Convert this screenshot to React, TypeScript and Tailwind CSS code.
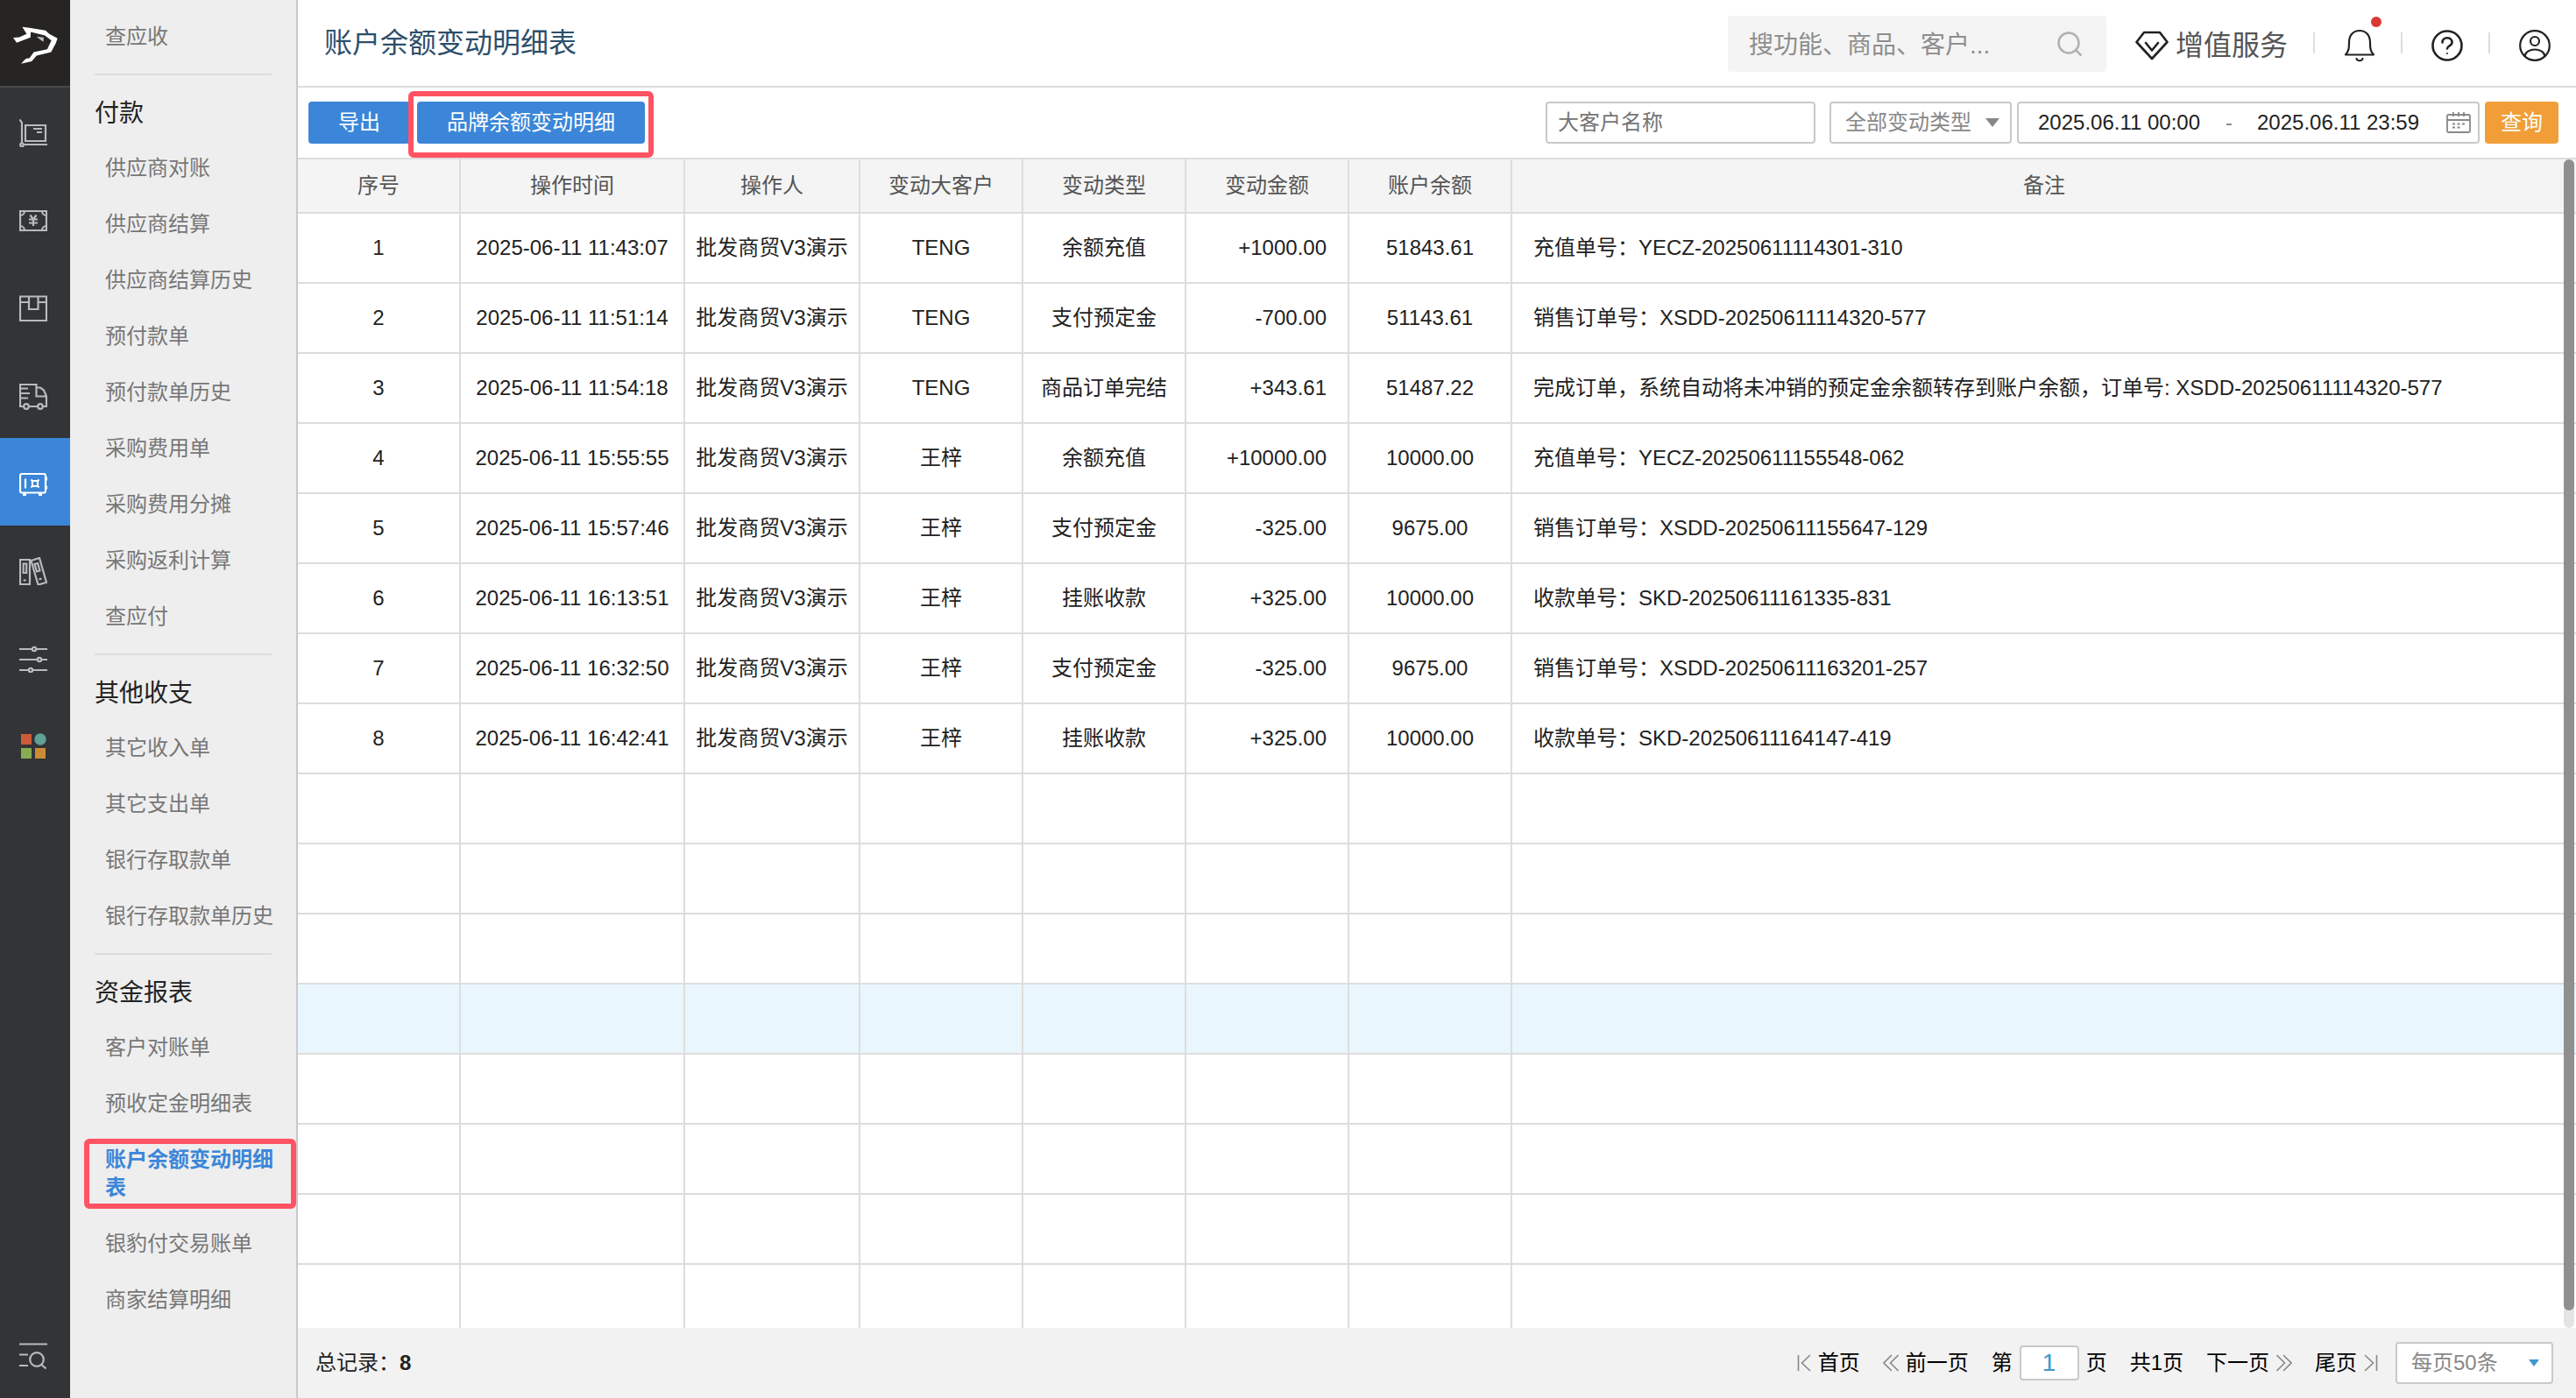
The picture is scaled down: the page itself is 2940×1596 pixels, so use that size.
/**
 * 账户余额变动明细表
 *
 * Report page: icon rail, report menu, filter bar, detail table and pager
 */

import { useState } from 'react';
import type { ReactNode } from 'react';

type MenuGroup = { title?: string; items: string[] };

type Change = {
  time: string;
  operator: string;
  customer: string;
  type: string;
  amount: string;
  balance: string;
  remark: string;
};

const ACTIVE_MENU = '账户余额变动明细表';

const menuGroups: MenuGroup[] = [
  { items: ['查应收'] },
  {
    title: '付款',
    items: [
      '供应商对账',
      '供应商结算',
      '供应商结算历史',
      '预付款单',
      '预付款单历史',
      '采购费用单',
      '采购费用分摊',
      '采购返利计算',
      '查应付',
    ],
  },
  { title: '其他收支', items: ['其它收入单', '其它支出单', '银行存取款单', '银行存取款单历史'] },
  {
    title: '资金报表',
    items: ['客户对账单', '预收定金明细表', ACTIVE_MENU, '银豹付交易账单', '商家结算明细'],
  },
];

const OPERATOR = '批发商贸V3演示';

const changes: Change[] = [
  { time: '2025-06-11 11:43:07', operator: OPERATOR, customer: 'TENG', type: '余额充值', amount: '+1000.00', balance: '51843.61', remark: '充值单号：YECZ-20250611114301-310' },
  { time: '2025-06-11 11:51:14', operator: OPERATOR, customer: 'TENG', type: '支付预定金', amount: '-700.00', balance: '51143.61', remark: '销售订单号：XSDD-20250611114320-577' },
  { time: '2025-06-11 11:54:18', operator: OPERATOR, customer: 'TENG', type: '商品订单完结', amount: '+343.61', balance: '51487.22', remark: '完成订单，系统自动将未冲销的预定金余额转存到账户余额，订单号: XSDD-20250611114320-577' },
  { time: '2025-06-11 15:55:55', operator: OPERATOR, customer: '王梓', type: '余额充值', amount: '+10000.00', balance: '10000.00', remark: '充值单号：YECZ-20250611155548-062' },
  { time: '2025-06-11 15:57:46', operator: OPERATOR, customer: '王梓', type: '支付预定金', amount: '-325.00', balance: '9675.00', remark: '销售订单号：XSDD-20250611155647-129' },
  { time: '2025-06-11 16:13:51', operator: OPERATOR, customer: '王梓', type: '挂账收款', amount: '+325.00', balance: '10000.00', remark: '收款单号：SKD-20250611161335-831' },
  { time: '2025-06-11 16:32:50', operator: OPERATOR, customer: '王梓', type: '支付预定金', amount: '-325.00', balance: '9675.00', remark: '销售订单号：XSDD-20250611163201-257' },
  { time: '2025-06-11 16:42:41', operator: OPERATOR, customer: '王梓', type: '挂账收款', amount: '+325.00', balance: '10000.00', remark: '收款单号：SKD-20250611164147-419' },
];

const EMPTY_ROWS = 8;
const HOVERED_EMPTY_ROW = 3;

/* Rail icons, all on a 32px grid */
const railIcons: { label: string; icon: ReactNode }[] = [
  {
    label: '进货',
    icon: (
      <>
        <path d="M0.500 0.500 3 4v24M5.500 29H32" />
        <circle cx="3" cy="29.500" r="1.800" />
        <path d="M7 7h23v18H7zM16 11h10M20 15h6" />
      </>
    ),
  },
  {
    label: '销售',
    icon: (
      <>
        <path d="M1 5h30v22H1z" />
        <path d="M1 10a5 5 0 0 0 5-5M26 5a5 5 0 0 0 5 5M31 22a5 5 0 0 0-5 5M6 27a5 5 0 0 0-5-5" />
        <path d="m12.500 9.500 3.500 5 3.500-5M16 14.500V22M11 14.500h10M11 18.500h10" />
      </>
    ),
  },
  {
    label: '库存',
    icon: <path d="M1 2.500h30v27.500H1zM1 9h9.500M21.500 9H31M11 2.500v14.500h10.500V2.500" />,
  },
  {
    label: '配送',
    icon: (
      <>
        <path d="M5 28H1V3h18.500v13.500H31M19.500 6.500H24l4 3 3 7V28h-4M11 28h10" />
        <circle cx="8" cy="28" r="2.800" />
        <circle cx="24" cy="28" r="2.800" />
        <path d="M1 7.500h9M1 13h11M1 18.500h9" />
      </>
    ),
  },
  {
    label: '资金',
    icon: (
      <>
        <rect x="1" y="5" width="29" height="21.500" rx="2" />
        <path d="M7 10.500v11M30 10h2M30 20.500h2" />
        <path d="M30.500 8.500v4M30.500 18.500v4M4 28.500h4M22 28.500h4" strokeWidth="3" />
        <path d="M15 13h6v6h-6zM13.500 11.500 15 13M22.500 11.500 21 13M13.500 20.500 15 19M22.500 20.500 21 19" />
      </>
    ),
  },
  {
    label: '报表',
    icon: (
      <>
        <path d="M1 3h11v28H1zM4.700 7.500h3.500v10.500H4.700zM4.700 26.500h3" />
        <path d="m13.500 4 9.500-3 8 28-9.500 2.500zM17.500 8l3.500-1 2.500 8.500-3.500 1zM22.500 25.500l3-1" />
      </>
    ),
  },
  {
    label: '设置',
    icon: (
      <>
        <path d="M0 5h15M19 5h13M0 17h21M25 17h7M0 29h11M15 29h17" />
        <circle cx="17" cy="5" r="2.200" />
        <circle cx="23" cy="17" r="2.200" />
        <circle cx="13" cy="29" r="2.200" />
      </>
    ),
  },
  {
    label: '应用',
    icon: (
      <g stroke="none">
        <rect x="2" y="2" width="12" height="12" fill="#cb5c37" />
        <circle cx="24" cy="8" r="6.700" fill="#5fa195" />
        <rect x="2" y="18" width="12" height="12" fill="#86ad52" />
        <rect x="18" y="18" width="12" height="12" fill="#cd8b36" />
      </g>
    ),
  },
];

function RailButton({ label, active, children }: { label: string; active?: boolean; children: ReactNode }) {
  return (
    <button
      aria-label={label}
      className={`flex h-[100px] w-full shrink-0 items-center justify-center pt-1 pr-1 ${
        active ? 'bg-[#3b86d8] text-white' : 'text-[#b9babb]'
      }`}
    >
      <svg viewBox="0 0 32 32" className="size-8" fill="none" stroke="currentColor" strokeWidth="2.200">
        {children}
      </svg>
    </button>
  );
}

function Rail() {
  return (
    <nav className="flex w-20 shrink-0 flex-col bg-[#333436]">
      <a
        href="#home"
        aria-label="首页"
        className="flex h-[100px] shrink-0 items-center justify-center border-b-2 border-[#48494b] bg-[#272523] pt-1"
      >
        <svg viewBox="42 90 152 128" className="h-[43px] w-[51px]" fill="#fff">
          <path d="M42 129 63 127 88 116 73 92 97 95 152 104 165 116 193 131 187 148 171 178 122 190 105 209 69 217 85 200 98 198 112 178 158 168 172 138 150 121 102 109 101 128 54 146z" />
          <path d="M122 125 146 128 145 143 134 135z" opacity="0.7" />
        </svg>
      </a>
      {railIcons.map(({ label, icon }) => (
        <RailButton key={label} label={label} active={label === '资金'}>
          {icon}
        </RailButton>
      ))}
      <div className="mt-auto">
        <RailButton label="查找功能">
          <path d="M0 2.500h32M0 14.500h10M0 27h10" />
          <circle cx="20" cy="20" r="7.800" />
          <path d="m25.500 26 5 4.500" />
        </RailButton>
      </div>
    </nav>
  );
}

function SideMenu() {
  return (
    <aside className="w-[260px] shrink-0 border-r-2 border-[#c9c9c9] bg-[#eee] pt-2.5">
      {menuGroups.map((group, i) => (
        <section key={i}>
          {group.title && (
            <>
              <hr className="mx-7 mt-2.5 border-t-2 border-[#dcdcdc]" />
              <h2 className="px-7 pt-3.5 text-[28px] leading-[60px] text-[#222]">{group.title}</h2>
            </>
          )}
          <ul>
            {group.items.map((item) => (
              <li key={item} className="relative">
                <a
                  href="#report"
                  className={`block py-4 pr-6 pl-10 text-2xl ${
                    item === ACTIVE_MENU ? 'font-bold text-[#3b86d8]' : 'text-[#777]'
                  }`}
                >
                  {item}
                </a>
                {item === ACTIVE_MENU && (
                  <span className="pointer-events-none absolute top-2 right-0 bottom-2 left-4 rounded-md border-[6px] border-[#ff5364]" />
                )}
              </li>
            ))}
          </ul>
        </section>
      ))}
    </aside>
  );
}

function HeaderAction({ label, children }: { label: string; children: ReactNode }) {
  return (
    <div className="flex w-[100px] items-center">
      <span className="h-6 w-0.5 bg-[#ddd]" />
      <button aria-label={label} className="relative flex flex-1 justify-center pt-1.5 pl-1">
        {children}
      </button>
    </div>
  );
}

function Header() {
  return (
    <header className="flex h-[100px] shrink-0 items-center border-b-2 border-[#ddd] pl-[30px]">
      <h1 className="text-[32px] leading-10 text-[#2d4f6c]">账户余额变动明细表</h1>
      <div className="relative ml-auto">
        <input
          type="search"
          aria-label="搜索"
          placeholder="搜功能、商品、客户..."
          className="mt-0.5 h-16 w-[432px] rounded bg-[#f4f4f4] pt-1 pr-20 pl-6 text-[28px] placeholder:text-[#8e8e8e]"
        />
        <svg viewBox="0 0 28 28" className="absolute top-5 right-7 size-7" fill="none" stroke="#b0b0b0" strokeWidth="2.500">
          <circle cx="13" cy="13" r="11.500" />
          <path d="m21 21 6.500 6.500" />
        </svg>
      </div>
      <button className="mr-[29px] ml-[33px] flex items-center gap-2 pt-1.5 text-[32px] leading-10 text-[#555]">
        <svg viewBox="0 0 38 34" className="h-[34px] w-[38px]" fill="none" stroke="#222" strokeWidth="2.600" strokeLinejoin="round">
          <path d="M10 2h18l8.500 11L19 32 1.500 13z" />
          <path d="m12 14 7 8.500 7-8.500" strokeLinecap="round" />
        </svg>
        增值服务
      </button>
      <HeaderAction label="消息">
        <svg viewBox="0 0 36 38" className="h-[38px] w-9" fill="none" stroke="#222" strokeWidth="2.200" strokeLinejoin="round">
          <path d="M2 29.500c4-4.500 4-8 4-14C6 7 11 2 18 2s12 5 12 13.500c0 6 0 9.500 4 14z" />
          <path d="M14.500 34c1 3 6 3 7 0" strokeLinecap="round" />
        </svg>
        <span className="absolute -top-2 right-[22px] size-3 rounded-full bg-[#d93a35]" />
      </HeaderAction>
      <HeaderAction label="帮助">
        <svg viewBox="0 0 36 36" className="size-9" fill="none" stroke="#222" strokeWidth="2.600">
          <circle cx="18" cy="18" r="16.500" />
          <path d="M12.500 14.500c0-7 11-7 11 0 0 4-5.500 3.500-5.500 7" strokeLinecap="round" />
          <circle cx="18" cy="27" r="1" fill="#222" stroke="none" />
        </svg>
      </HeaderAction>
      <HeaderAction label="账号">
        <svg viewBox="0 0 36 36" className="size-9" fill="none" stroke="#222" strokeWidth="2.200">
          <circle cx="18" cy="18" r="16.800" />
          <circle cx="18" cy="13" r="5" />
          <path d="M6.500 30c1.500-10 21.500-10 23 0" />
        </svg>
      </HeaderAction>
    </header>
  );
}

function Toolbar() {
  const [start, setStart] = useState('2025.06.11 00:00');
  const [end, setEnd] = useState('2025.06.11 23:59');

  return (
    <div className="flex h-[82px] shrink-0 items-start gap-2 border-b-2 border-[#ddd] px-3 pt-4 pr-5">
      <button className="h-12 rounded bg-[#3b86d8] px-[34px] text-2xl text-white">导出</button>
      <div className="relative">
        <button className="h-12 rounded bg-[#3b86d8] px-[34px] text-2xl text-white">品牌余额变动明细</button>
        <span className="pointer-events-none absolute -inset-x-2.5 -top-3 -bottom-4 z-10 rounded-md border-[6px] border-[#ff5364]" />
      </div>

      <form className="ml-auto flex items-center gap-1.5 text-2xl" onSubmit={(e) => e.preventDefault()}>
        <input
          type="text"
          aria-label="大客户名称"
          placeholder="大客户名称"
          className="mr-2.5 h-12 w-[308px] rounded border-2 border-[#c9c9c9] px-3 placeholder:text-[#757575]"
        />
        <div className="relative">
          <select
            aria-label="变动类型"
            className="h-12 w-[208px] appearance-none rounded border-2 border-[#c9c9c9] pl-4 text-[#888]"
          >
            <option>全部变动类型</option>
          </select>
          <svg viewBox="0 0 16 10" className="pointer-events-none absolute top-[19px] right-3.5 h-2.5 w-4" fill="#888">
            <path d="M0 0h16L8 10z" />
          </svg>
        </div>
        <div className="flex h-12 w-[528px] items-center rounded border-2 border-[#c9c9c9] pr-2 pl-[22px] text-[#222]">
          <input
            type="text"
            aria-label="开始时间"
            value={start}
            onChange={(e) => setStart(e.target.value)}
            className="w-[194px]"
          />
          <span className="pr-7 pl-5 text-[#888]">-</span>
          <input
            type="text"
            aria-label="结束时间"
            value={end}
            onChange={(e) => setEnd(e.target.value)}
            className="w-[194px]"
          />
          <svg viewBox="0 0 28 24" className="ml-auto h-6 w-7" fill="none" stroke="#888" strokeWidth="1.800">
            <rect x="1" y="3" width="26" height="20" rx="1.500" />
            <path d="M1 9h26M8 0v5M14 0v5M20 0v5" />
            <path d="M7 13.500h3M12.500 13.500h3M18 13.500h3M7 17.500h3M12.500 17.500h3" strokeWidth="2" />
          </svg>
        </div>
        <button type="submit" className="h-12 w-[84px] rounded bg-[#f19e38] text-white">
          查询
        </button>
      </form>
    </div>
  );
}

function ChangeTable() {
  const cell = 'border-r-2 border-b-2 border-[#ddd]';

  return (
    <div className="relative min-h-0 flex-1 overflow-hidden">
      <table className="w-full table-fixed border-separate border-spacing-0 text-center text-2xl whitespace-nowrap text-[#222]">
        <colgroup>
          <col className="w-[186px]" />
          <col className="w-[256px]" />
          <col className="w-[200px]" />
          <col className="w-[186px]" />
          <col className="w-[186px]" />
          <col className="w-[186px]" />
          <col className="w-[186px]" />
          <col />
        </colgroup>
        <thead>
          <tr className="h-[62px] bg-[#f4f4f4] text-[#555]">
            {['序号', '操作时间', '操作人', '变动大客户', '变动类型', '变动金额', '账户余额'].map((name) => (
              <th key={name} className={`${cell} font-normal`}>
                {name}
              </th>
            ))}
            <th className="border-b-2 border-[#ddd] font-normal">备注</th>
          </tr>
        </thead>
        <tbody>
          {changes.map((row, i) => (
            <tr key={row.time} className="h-20">
              <td className={cell}>{i + 1}</td>
              <td className={cell}>{row.time}</td>
              <td className={cell}>{row.operator}</td>
              <td className={cell}>{row.customer}</td>
              <td className={cell}>{row.type}</td>
              <td className={`${cell} pr-6 text-right`}>{row.amount}</td>
              <td className={cell}>{row.balance}</td>
              <td className="border-b-2 border-[#ddd] pl-6 text-left">{row.remark}</td>
            </tr>
          ))}
          {Array.from({ length: EMPTY_ROWS }, (_, i) => (
            <tr key={i} className={i === HOVERED_EMPTY_ROW ? 'h-20 bg-[#e9f6fd]' : 'h-20'}>
              {Array.from({ length: 7 }, (_, n) => (
                <td key={n} className={cell} />
              ))}
              <td className="border-b-2 border-[#ddd]" />
            </tr>
          ))}
        </tbody>
      </table>

      {/* Scrollbar */}
      <div className="absolute inset-y-0 right-0.5 w-3 rounded-full bg-[#e4e4e4] pb-5">
        <div className="h-full rounded-full bg-[#8f8f8f]" />
      </div>
    </div>
  );
}

function Pager() {
  const [page, setPage] = useState('1');

  return (
    <footer className="flex h-20 shrink-0 items-center bg-[#f2f2f2] pr-[26px] pl-5 text-2xl text-black">
      <p className="text-[#222]">
        总记录：<b>8</b>
      </p>
      <nav className="ml-auto flex items-center gap-[26px]">
        <button className="flex items-center gap-2">
          <svg viewBox="0 0 16 20" className="h-5 w-4" fill="none" stroke="#888" strokeWidth="1.600">
            <path d="M1.500 1v18M15 1 5.500 10 15 19" />
          </svg>
          首页
        </button>
        <button className="flex items-center gap-2">
          <svg viewBox="0 0 18 20" className="h-5 w-[18px]" fill="none" stroke="#888" strokeWidth="1.600">
            <path d="M10 1 1 10l9 9M17.500 1l-9 9 9 9" />
          </svg>
          前一页
        </button>
        <label className="flex items-center gap-2">
          第
          <input
            type="text"
            value={page}
            onChange={(e) => setPage(e.target.value)}
            className="h-10 w-[68px] rounded border-2 border-[#c9c9c9] bg-white text-center text-[28px] text-[#3f97cf]"
          />
          页
        </label>
        <span>共1页</span>
        <button className="flex items-center gap-2">
          下一页
          <svg viewBox="0 0 18 20" className="h-5 w-[18px]" fill="none" stroke="#888" strokeWidth="1.600">
            <path d="m0.500 1 9 9-9 9M8 1l9 9-9 9" />
          </svg>
        </button>
        <button className="flex items-center gap-2">
          尾页
          <svg viewBox="0 0 16 20" className="h-5 w-4" fill="none" stroke="#888" strokeWidth="1.600">
            <path d="M14.500 1v18M1 1l9.500 9L1 19" />
          </svg>
        </button>
      </nav>
      <div className="relative ml-5">
        <select
          aria-label="每页条数"
          className="h-12 w-[180px] appearance-none rounded border-2 border-[#c9c9c9] bg-white pl-4 text-[#888]"
        >
          <option>每页50条</option>
        </select>
        <svg viewBox="0 0 12 8" className="pointer-events-none absolute top-5 right-4 h-2 w-3" fill="#3f97cf">
          <path d="M0 0h12L6 8z" />
        </svg>
      </div>
    </footer>
  );
}

export default function App() {
  return (
    <div className="flex h-screen overflow-hidden bg-white font-['Liberation_Sans','Noto_Sans_CJK_SC',sans-serif]">
      <Rail />
      <SideMenu />
      <main className="flex min-w-0 flex-1 flex-col">
        <Header />
        <Toolbar />
        <ChangeTable />
        <Pager />
      </main>
    </div>
  );
}
